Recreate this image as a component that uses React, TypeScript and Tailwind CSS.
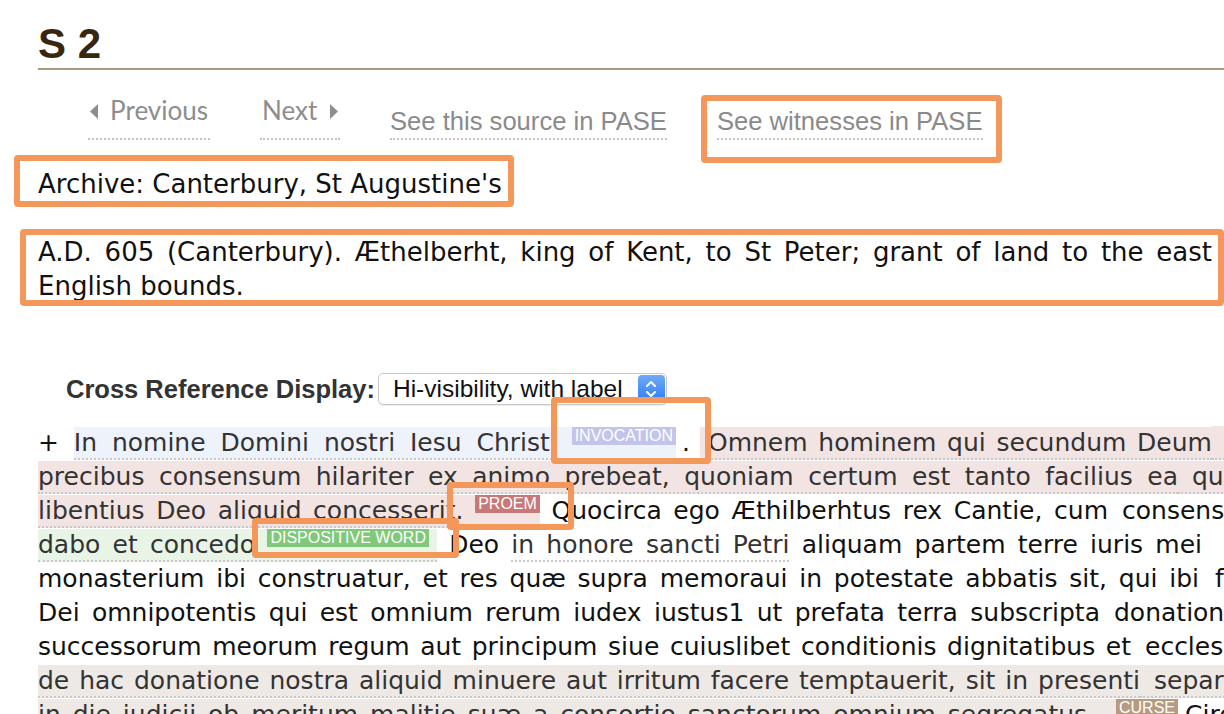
import type { ReactNode } from "react";

function Tag({ cls, children }: { cls: string; children: ReactNode }) {
  return (
    <span
      className={`relative top-[1px] inline-block align-top px-[3px] font-['Liberation_Sans',sans-serif] text-[16px] leading-[18px] text-white ${cls}`}
    >
      {children}
    </span>
  );
}

const hl = "py-[1px] border-b-2 border-dotted border-[#c9c9c9] text-[#333]";
const just = "shrink-0 text-justify [text-align-last:justify]";

function Line({ w, children, tail }: { w: string; children: ReactNode; tail?: ReactNode }) {
  return (
    <div className="flex h-[34px] leading-[34px]">
      <div className={`${just} ${w}`}>{children}</div>
      {tail && <div className="shrink-0 whitespace-nowrap">{tail}</div>}
    </div>
  );
}

function Box({ cls }: { cls: string }) {
  return <div className={`pointer-events-none absolute rounded-[4px] border-[6px] border-[#f4975a] ${cls}`} />;
}

export default function App() {
  return (
    <div className="relative h-[714px] w-[1224px] overflow-hidden bg-white font-['DejaVu_Sans',sans-serif] text-[25px] text-[#111]">
      <div className="pl-[38px]">
        <h1 className="pt-[23px] font-['Liberation_Sans',sans-serif] text-[42px] font-bold leading-[42px] text-[#38260f]">
          S 2
        </h1>
        <div className="mt-[3px] border-b-2 border-[#a99b7e]" />

        <nav className="ml-[50px] mt-[27px] flex items-end gap-[50px]">
          <a className="flex w-[122px] items-center justify-between border-b-2 border-dotted border-[#c4c4c4] px-[2px] pb-[15px] font-['Lato',sans-serif] text-[26px] leading-none text-[#8d8d8d]">
            <svg width="8" height="15" viewBox="0 0 8 15" className="mt-[2px]">
              <path d="M8 0 L0 7.5 L8 15 Z" fill="#8d8d8d" />
            </svg>
            Previous
          </a>
          <a className="flex w-[80px] items-center justify-between border-b-2 border-dotted border-[#c4c4c4] px-[2px] pb-[15px] font-['Lato',sans-serif] text-[26px] leading-none text-[#8d8d8d]">
            Next
            <svg width="8" height="15" viewBox="0 0 8 15" className="mt-[2px]">
              <path d="M0 0 L8 7.5 L0 15 Z" fill="#8d8d8d" />
            </svg>
          </a>
          <a className="border-b-2 border-dotted border-[#c4c4c4] pb-[3px] font-['Liberation_Sans',sans-serif] text-[25.6px] leading-none text-[#8a8a8a]">
            See this source in PASE
          </a>
          <a className="border-b-2 border-dotted border-[#c4c4c4] pb-[3px] font-['Liberation_Sans',sans-serif] text-[25.6px] leading-none text-[#8a8a8a]">
            See witnesses in PASE
          </a>
        </nav>

        <p className="mt-[27px] text-[26px] leading-[34px]">Archive: Canterbury, St Augustine's</p>

        <div className="mt-[34px] text-[26px] leading-[34px]">
          <p className="w-[1174px] text-justify [text-align-last:justify]">
            A.D. 605 (Canterbury). Æthelberht, king of Kent, to St Peter; grant of land to the east
          </p>
          <p>English bounds.</p>
        </div>

        <div className="mt-[70px] flex h-[32px] items-center pl-[28px]">
          <span className="font-['Liberation_Sans',sans-serif] text-[25.5px] font-bold text-[#333]">
            Cross Reference Display:
          </span>
          <div className="ml-[3px] flex h-[32px] w-[289px] items-center rounded-[5px] border border-[#c8c8c8] bg-white shadow-[0_1px_1px_rgba(0,0,0,0.08)]">
            <span className="pl-[14px] font-['Liberation_Sans',sans-serif] text-[24.5px] leading-none text-[#111]">
              Hi-visibility, with label
            </span>
            <span className="ml-auto mr-[1px] flex h-[28px] w-[27px] items-center justify-center rounded-[4px] bg-gradient-to-b from-[#6eaaf8] to-[#2d78f4]">
              <svg width="12" height="20" viewBox="0 0 12 20">
                <path d="M2 7 L6 3 L10 7 M2 13 L6 17 L10 13" stroke="white" strokeWidth="2" fill="none" strokeLinecap="round" strokeLinejoin="round" />
              </svg>
            </span>
          </div>
        </div>

        <div className="mt-[21px]">
          <div className="flex h-[34px] leading-[34px]">
            <div className={`${just} w-[638px]`}>
              +{" "}
              <span className={`${hl} bg-[#eef2fb]`}>
                In nomine Domini nostri Iesu Christi <Tag cls="bg-[#c3c4ec]">INVOCATION</Tag>
              </span>
            </div>
            <span className="shrink-0 pl-[6px] pr-[10px]">.</span>
            <div className={`${just} w-[512px]`}>
              <span className={`${hl} bg-[#f3e4e4] pl-[8px]`}>Omnem hominem qui secundum Deum</span>
            </div>
            <span className={`shrink-0 whitespace-nowrap ${hl} bg-[#f3e4e4] pl-[24px]`}>uiuit et remunerari</span>
          </div>
          <Line
            w="w-[1140px]"
            tail={<span className={`${hl} bg-[#f3e4e4] pl-[14px]`}>quae ipse a Deo</span>}
          >
            <span className={`${hl} bg-[#f3e4e4]`}>
              precibus consensum hilariter ex animo prebeat, quoniam certum est tanto facilius ea
            </span>
          </Line>
          <Line w="w-[1070px]" tail={<span className="pl-[14px]">consensu venerabilis</span>}>
            <span className={`${hl} bg-[#f3e4e4]`}>
              libentius Deo aliquid concesserit. <Tag cls="bg-[#c97878]">PROEM</Tag>
            </span>{" "}
            Quocirca ego Æthilberhtus rex Cantie, cum
          </Line>
          <Line w="w-[1164px]" tail={<span className="pl-[26px]">quæ iacet</span>}>
            <span className={`${hl} bg-[#e7f4e6]`}>
              dabo et concedo <Tag cls="mr-[8px] bg-[#80c97b]">DISPOSITIVE WORD</Tag>
            </span>{" "}
            Deo <span className={`${hl} text-[#333]`}>in honore sancti Petri</span> aliquam partem terre iuris mei
          </Line>
          <Line w="w-[1161px]" tail={<span className="pl-[16px]">fuerit ordinatus.</span>}>
            monasterium ibi construatur, et res quæ supra memoraui in potestate abbatis sit, qui ibi
          </Line>
          <Line w="w-[1062px]" tail={<span className="pl-[14px]">donatione sempiterna</span>}>
            Dei omnipotentis qui est omnium rerum iudex iustus1 ut prefata terra subscripta
          </Line>
          <Line w="w-[1093px]" tail={<span className="pl-[14px]">ecclesiasticis gradibus</span>}>
            successorum meorum regum aut principum siue cuiuslibet conditionis dignitatibus et
          </Line>
          <Line
            w="w-[1102px]"
            tail={<span className={`${hl} bg-[#efe9e6] pl-[14px]`}>separatus a sancta</span>}
          >
            <span className={`${hl} bg-[#efe9e6]`}>
              de hac donatione nostra aliquid minuere aut irritum facere temptauerit, sit in presenti
            </span>
          </Line>
          <Line
            w="w-[1057px]"
            tail={
              <>
                <span className={`${hl} bg-[#efe9e6] pl-[21px]`} />
                <Tag cls="bg-[#b79b80]">CURSE</Tag>
                <span className="pl-[7px]">Circumcingitur</span>
              </>
            }
          >
            <span className={`${hl} bg-[#efe9e6]`}>
              in die iudicii ob meritum malitie suæ a consortio sanctorum omnium segregatus.
            </span>
          </Line>
        </div>
      </div>

      <Box cls="left-[701px] top-[95px] h-[68px] w-[301px]" />
      <Box cls="left-[14px] top-[155px] h-[52px] w-[500px]" />
      <Box cls="left-[20px] top-[229px] h-[77px] w-[1204px]" />
      <Box cls="left-[551px] top-[397px] h-[67px] w-[160px]" />
      <Box cls="left-[447px] top-[482px] h-[48px] w-[127px]" />
      <Box cls="left-[252px] top-[518px] h-[40px] w-[207px]" />
    </div>
  );
}
